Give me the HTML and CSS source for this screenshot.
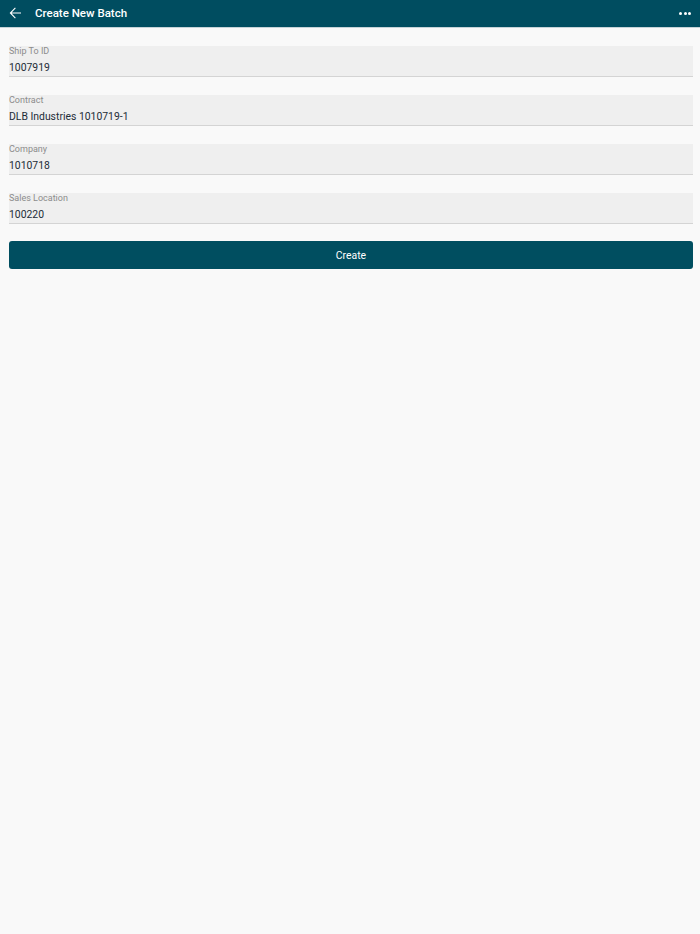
FILE: index.html
```html
<!DOCTYPE html>
<html>
<head>
<meta charset="utf-8">
<link rel="stylesheet" href="styles.css">
</head>
<body>
<header class="appbar">
  <div class="appbar-left">
    <svg class="back" width="18" height="18" viewBox="0 0 24 24"><path d="M20 11.2H7.6l5.4-5.4-1-1L4.8 12l7.2 7.2 1-1-5.4-5.4H20z" fill="#fff"/></svg>
    <span class="title">Create New Batch</span>
  </div>
  <div class="more"><span></span><span></span><span></span></div>
</header>
<main class="form">
  <div class="field"><div class="label">Ship To ID</div><div class="value">1007919</div></div>
  <div class="field"><div class="label">Contract</div><div class="value">DLB Industries 1010719-1</div></div>
  <div class="field"><div class="label">Company</div><div class="value">1010718</div></div>
  <div class="field"><div class="label">Sales Location</div><div class="value">100220</div></div>
  <button class="create">Create</button>
</main>
</body>
</html>
```
FILE: styles.css
```css
html, body {
  margin: 0;
  padding: 0;
  background: #f9f9f9;
  font-family: Roboto, "Liberation Sans", sans-serif;
}
body {
  width: 700px;
  height: 934px;
}
.appbar {
  height: 27px;
  background: #004d60;
  border-bottom: 1px solid #c5d3d8;
  display: flex;
  align-items: center;
  justify-content: space-between;
  padding: 0 9px 0 6px;
  color: #fff;
}
.appbar-left {
  display: flex;
  align-items: center;
  padding-bottom: 1px;
}
.back {
  display: block;
  width: 18px;
  height: 18px;
}
.title {
  margin-left: 11px;
  font-size: 11.5px;
  font-weight: 500;
}
.more {
  display: flex;
  gap: 1.5px;
  padding-bottom: 1px;
}
.more span {
  width: 3px;
  height: 3px;
  background: #fff;
  border-radius: 50%;
}
.form {
  padding: 18px 7px 0 9px;
  display: flex;
  flex-direction: column;
  gap: 18px;
}
.field {
  background: #efefef;
  border-bottom: 1px solid #d4d4d4;
  height: 30px;
  display: flex;
  flex-direction: column;
}
.label {
  font-size: 9px;
  color: #8c8c8c;
  line-height: 10px;
}
.value {
  font-size: 10.4px;
  color: #1d2d38;
  line-height: 13px;
  margin-top: 5px;
}
.create {
  height: 28px;
  background: #004e60;
  color: #fff;
  border: none;
  border-radius: 3px;
  font-family: Roboto, "Liberation Sans", sans-serif;
  font-size: 10.4px;
  padding: 0;
  margin-top: -1px;
}
```
